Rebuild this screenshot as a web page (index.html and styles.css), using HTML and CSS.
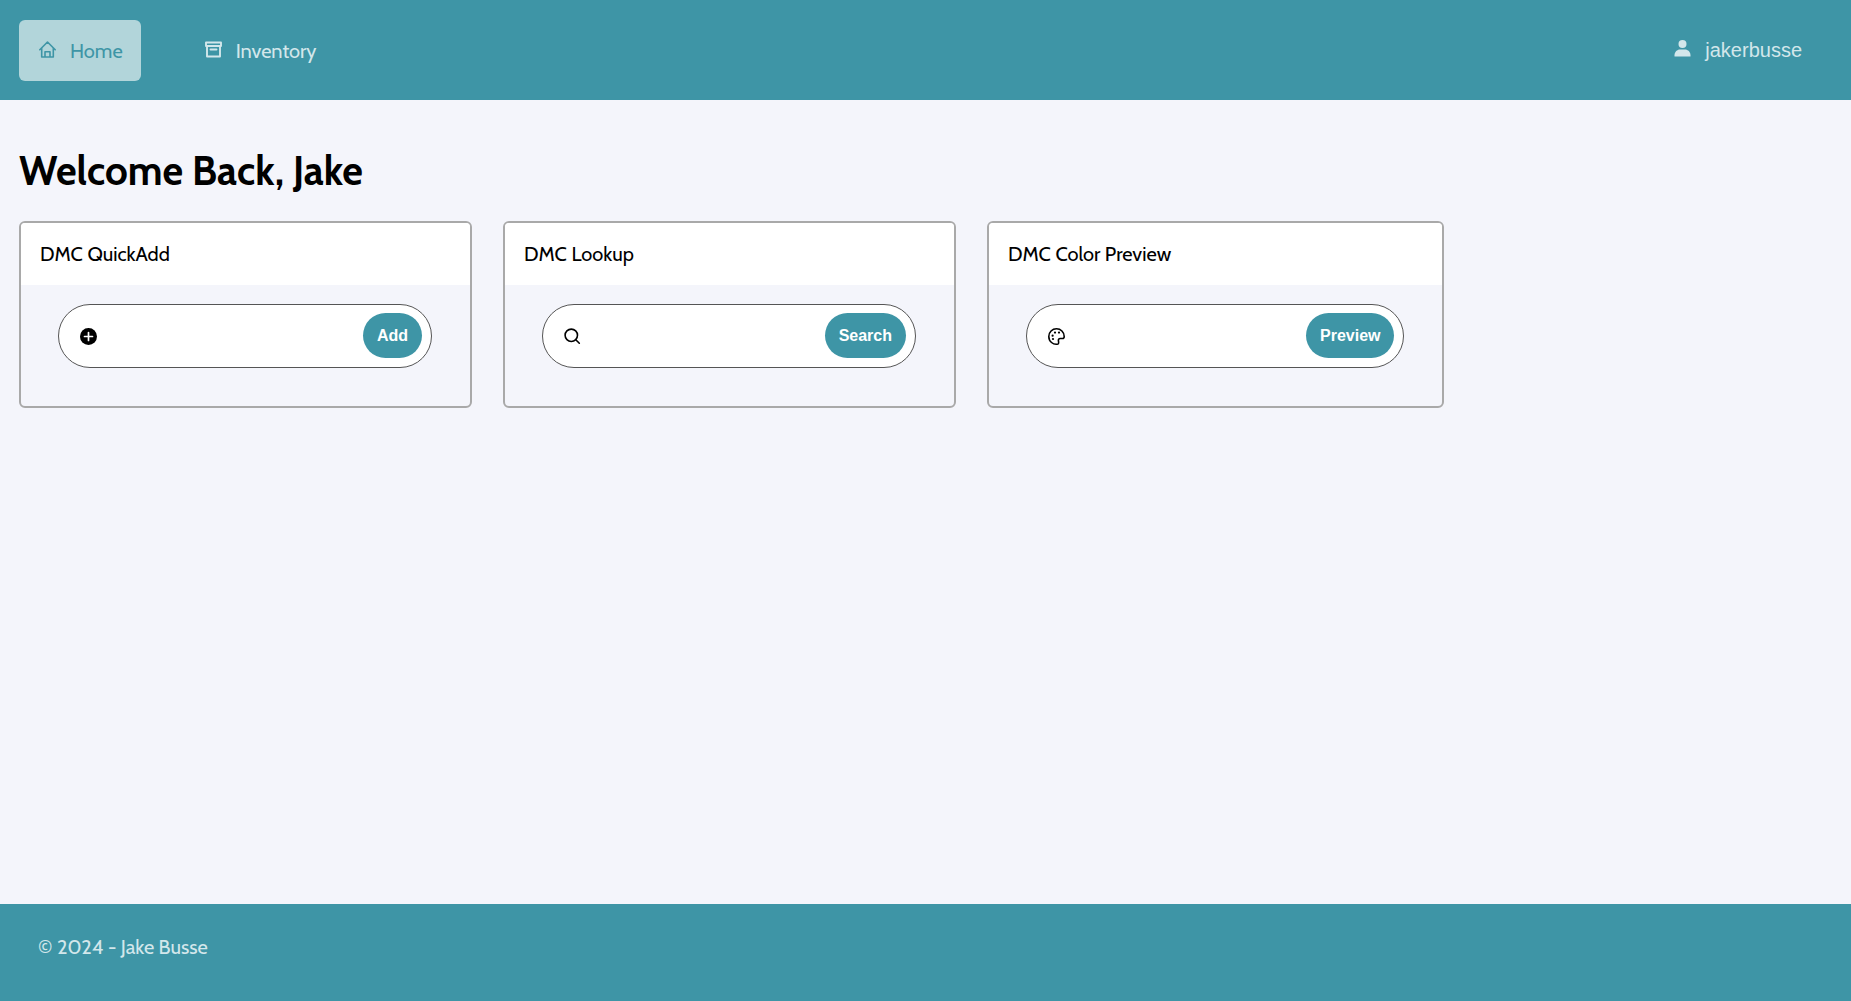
FILE: index.html
```html
<!DOCTYPE html>
<html lang="en">
<head>
    <meta charset="UTF-8">
    <meta name="viewport" content="width=device-width, initial-scale=1.0">
    <title>Home</title>
    <link rel="stylesheet" href="styles.css">
</head>
<body>
    <header class="navbar">
        <nav class="nav-links">
            <a class="nav-link active" href="#">
                <svg class="icon" viewBox="0 0 17 17" fill="none" stroke="currentColor" stroke-width="1.6" stroke-linecap="round" stroke-linejoin="round">
                    <path d="M.8 8.7 8.5 1l7.7 7.7M2.7 7v9h11.6V7M6 16v-5.3h5V16"/>
                </svg>
                <span>Home</span>
            </a>
            <a class="nav-link" href="#">
                <svg class="icon" viewBox="0 0 17 17" fill="none" stroke="currentColor" stroke-width="1.9" stroke-linejoin="round">
                    <path d="M1 1.5h15V5H1zM2 5v10.500h13V5"/>
                    <path d="M5.5 8.5h6" stroke-linecap="round"/>
                </svg>
                <span>Inventory</span>
            </a>
        </nav>
        <button class="user-menu" type="button">
            <svg class="icon" viewBox="0 0 17 17" fill="currentColor">
                <circle cx="8.5" cy="4" r="4"/>
                <path d="M.5 16.5v-1.3C.5 12 3.2 9.6 6 9.6h5c2.8 0 5.5 2.4 5.5 5.6v1.3z"/>
            </svg>
            <span>jakerbusse</span>
        </button>
    </header>

    <main class="content">
        <h1>Welcome Back, Jake</h1>
        <div class="cards">
            <section class="card">
                <h2>DMC QuickAdd</h2>
                <div class="card-body">
                    <form class="pill">
                        <label for="add">
                            <svg class="icon" viewBox="0 0 17 17" role="img" aria-label="Add">
                                <circle cx="8.5" cy="8.5" r="8.5"/>
                                <path d="M8.5 4.5v8M4.5 8.5h8" fill="none" stroke="#fff" stroke-width="1.7" stroke-linecap="round"/>
                            </svg>
                        </label>
                        <input id="add" type="text">
                        <button class="btn" type="button">Add</button>
                    </form>
                </div>
            </section>

            <section class="card">
                <h2>DMC Lookup</h2>
                <div class="card-body">
                    <form class="pill">
                        <label for="lookup">
                            <svg class="icon" viewBox="0 0 17 17" role="img" aria-label="Search" fill="none" stroke="#000" stroke-width="1.6" stroke-linecap="round">
                                <circle cx="7.3" cy="7.3" r="6.2"/>
                                <path d="m11.8 11.8 3.5 3.4"/>
                            </svg>
                        </label>
                        <input id="lookup" type="text">
                        <button class="btn" type="button">Search</button>
                    </form>
                </div>
            </section>

            <section class="card">
                <h2>DMC Color Preview</h2>
                <div class="card-body">
                    <form class="pill">
                        <label for="preview">
                            <svg class="icon" viewBox="0 0 17 17" role="img" aria-label="Preview">
                                <path d="M10 16C5 17 .8 13.5.8 8.5a7.7 7.7 0 0 1 15.4 0c0 1.3-.7 2-1.7 2h-2.300c-1.200 0-1.800.8-1.800 1.800 0 1.200.8 3.300-.4 3.700z" fill="none" stroke="#000" stroke-width="1.6"/>
                                <circle cx="7" cy="4.6" r="1.1"/>
                                <circle cx="11" cy="4.6" r="1.1"/>
                                <circle cx="4.6" cy="7.7" r="1.1"/>
                                <circle cx="5" cy="11" r="1.1"/>
                            </svg>
                        </label>
                        <input id="preview" type="text">
                        <button class="btn" type="button">Preview</button>
                    </form>
                </div>
            </section>
        </div>
    </main>

    <footer class="footer">
        <p>© 2024 - Jake Busse</p>
    </footer>
</body>
</html>
```
FILE: styles.css
```css
* {
    box-sizing: border-box;
}

body {
    display: flex;
    flex-direction: column;
    min-height: 100vh;
    margin: 0;
    background-color: #f4f5fb;
    color: #000;
    font-family: Cabin, Lato, sans-serif;
    font-size: 20px;
    line-height: 24px;
}

.icon {
    display: block;
    width: 17px;
    height: 17px;
}

/* Navbar */
.navbar {
    display: flex;
    justify-content: space-between;
    align-items: center;
    height: 100px;
    padding: 0 49px 0 19px;
    background-color: #3e95a6;
}

.nav-links {
    display: flex;
    gap: 44px;
}

.nav-link {
    display: flex;
    align-items: center;
    gap: 14px;
    height: 61px;
    padding: 2px 18px 0 20px;
    border-radius: 6px;
    color: #d3e7eb;
    text-decoration: none;
}

.nav-link.active {
    background-color: #b2d5da;
    color: #3e95a6;
}

.user-menu {
    display: flex;
    align-items: center;
    gap: 14px;
    padding: 0;
    border: none;
    background: none;
    color: #d3e7eb;
    font-family: "Liberation Sans", Arial, sans-serif;
    font-size: 20px;
    cursor: pointer;
}

.navbar .icon {
    margin-bottom: 4px;
}

/* Main content */
.content {
    flex: 1;
    padding: 47px 19px;
}

h1 {
    margin: 0 0 26px;
    font-size: 40px;
    font-weight: bold;
    line-height: 48px;
}

.cards {
    display: flex;
    flex-wrap: wrap;
    gap: 31px;
}

.card {
    overflow: hidden;
    border: 2px solid #a9a9a9;
    border-radius: 6px;
}

.card h2 {
    margin: 0;
    padding: 19px;
    background-color: #fff;
    font-size: 20px;
    font-weight: normal;
}

.card-body {
    padding: 19px 38px 38px 37px;
}

.pill {
    display: flex;
    align-items: center;
    min-width: 374px;
    height: 64px;
    padding: 0 9px 2px 21px;
    border: 1px solid #555;
    border-radius: 32px;
    background-color: #fff;
}

.pill label {
    padding-top: 2px;
}

.pill input {
    flex: 1;
    width: 241px;
    height: 45px;
    padding: 0 8px;
    border: none;
    outline: none;
    background: none;
    font-size: 16px;
}

.btn {
    height: 45px;
    padding: 1px 14px 0;
    border: none;
    border-radius: 23px;
    background-color: #3e95a6;
    color: #fff;
    font-family: "Liberation Sans", Arial, sans-serif;
    font-size: 16px;
    font-weight: bold;
    cursor: pointer;
}

/* Footer */
.footer {
    height: 97px;
    padding: 31px 38px;
    background-color: #3e95a6;
    color: #d3e7eb;
}

.footer p {
    margin: 0;
}
```
